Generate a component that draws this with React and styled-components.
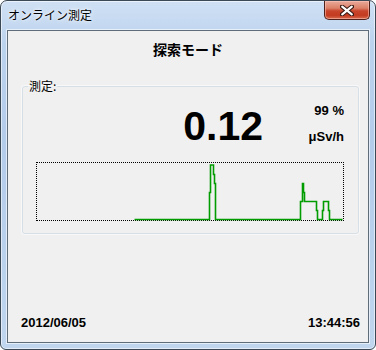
import React from "react";
import styled, { createGlobalStyle } from "styled-components";

const Global = createGlobalStyle`
  html, body { margin: 0; padding: 0; background: #ffffff; }
  * { box-sizing: border-box; }
`;

const Window = styled.div`
  width: 376px;
  height: 350px;
  border: 1px solid #3b4856;
  border-radius: 7px 7px 6px 6px;
  padding: 0 6px 6px 6px;
  display: flex;
  flex-direction: column;
  background: linear-gradient(to bottom, #cfe0f4 0%, #bcd3ee 12%, #b3ccea 40%, #c0d6ef 100%);
  box-shadow: inset 0 0 0 1px rgba(255, 255, 255, 0.55);
  overflow: hidden;
`;

const TitleBar = styled.div`
  height: 29px;
  display: flex;
  align-items: flex-start;
  justify-content: space-between;
  padding-left: 1px;
`;

const TitleText = styled.div`
  margin-top: 6px;
  font-family: "Noto Sans CJK JP", sans-serif;
  font-size: 12px;
  line-height: 16px;
  color: #000;
  text-shadow: 0 0 6px rgba(255, 255, 255, 0.9), 0 0 3px rgba(255, 255, 255, 0.9);
`;

const CloseButton = styled.div`
  width: 46px;
  height: 19px;
  margin-right: -1px;
  border: 1px solid #4f2019;
  border-top: none;
  border-radius: 0 0 5px 5px;
  background: linear-gradient(to bottom, #e9a99a 0%, #dc8068 40%, #c8442a 55%, #c43c22 80%, #d66a4c 100%);
  box-shadow: inset 0 0 0 1px rgba(255, 200, 190, 0.55);
  display: flex;
  align-items: center;
  justify-content: center;
`;

const Client = styled.div`
  flex: 1;
  border: 1px solid #5f6d7b;
  box-shadow: 0 0 0 1px rgba(255, 255, 255, 0.6);
  background: #f0f0f0;
  display: flex;
  flex-direction: column;
`;

const ModeTitle = styled.div`
  padding-top: 10px;
  text-align: center;
  font-family: "Noto Sans CJK JP", sans-serif;
  font-weight: 700;
  font-size: 14px;
  line-height: 16px;
  color: #000;
`;

const Group = styled.fieldset`
  margin: 21px 9px 0 14px;
  padding: 0 14px 12px 13px;
  border: 1px solid #d5dfe5;
  border-radius: 3px;
  box-shadow: 0 0 0 1px rgba(255, 255, 255, 0.5);
  min-width: 0;
`;

const Legend = styled.legend`
  margin-left: -8px;
  padding: 0 1px;
  font-family: "Noto Sans CJK JP", sans-serif;
  font-size: 12px;
  line-height: 16px;
  color: #000;
`;

const ValueRow = styled.div`
  display: flex;
  justify-content: flex-end;
  align-items: flex-start;
  gap: 21px;
  padding-top: 4px;
`;

const BigValue = styled.div`
  margin-top: 8px;
  font-family: "Liberation Sans", Arial, sans-serif;
  font-weight: 700;
  font-size: 41px;
  line-height: 41px;
  color: #000;
`;

const Units = styled.div`
  width: 60px;
  text-align: right;
  font-family: "Liberation Sans", Arial, sans-serif;
  font-weight: 700;
  font-size: 13px;
  line-height: 26px;
  color: #000;
`;

const Chart = styled.div`
  position: relative;
  margin-top: 12px;
  height: 59px;
  border: 1px dotted #000;
`;

const ChartSvg = styled.svg`
  position: absolute;
  left: -1px;
  top: -1px;
  overflow: visible;
`;

const Spacer = styled.div`
  flex: 1;
`;

const Footer = styled.div`
  display: flex;
  justify-content: space-between;
  padding: 0 8px 11px 13px;
  font-family: "Liberation Sans", Arial, sans-serif;
  font-weight: 700;
  font-size: 13px;
  line-height: 16px;
  color: #000;
`;

const pagePoints = [
  [134, 220], [209, 220], [209, 193], [210, 193], [210, 165.5], [213, 165.5],
  [213, 175], [214, 175], [214, 184], [215, 184], [215, 220], [300, 220],
  [300, 202], [302, 202], [302, 184], [303, 184], [303, 193], [304, 193],
  [304, 202], [316, 202], [316, 211], [317, 211], [317, 220], [322, 220],
  [322, 211], [323, 211], [323, 202], [328, 202], [328, 211], [329, 211],
  [329, 220], [342, 220],
];

const points = pagePoints.map(([x, y]) => `${x - 36 + 0.5},${y - 163 + 0.5}`).join(" ");

export default function App() {
  return (
    <>
      <Global />
      <Window>
        <TitleBar>
          <TitleText>オンライン測定</TitleText>
          <CloseButton>
            <svg width="14" height="11" viewBox="0 0 14 11">
              <path d="M2 1.5 L12 9.5 M12 1.5 L2 9.5" stroke="#3a1a14" strokeWidth="4.2" strokeLinecap="round" />
              <path d="M2.2 1.7 L11.8 9.3 M11.8 1.7 L2.2 9.3" stroke="#ffffff" strokeWidth="2.2" strokeLinecap="round" />
            </svg>
          </CloseButton>
        </TitleBar>
        <Client>
          <ModeTitle>探索モード</ModeTitle>
          <Group>
            <Legend>測定:</Legend>
            <ValueRow>
              <BigValue>0.12</BigValue>
              <Units>
                <div>99 %</div>
                <div>μSv/h</div>
              </Units>
            </ValueRow>
            <Chart>
              <ChartSvg width="308" height="59" viewBox="0 0 308 59">
                <polyline points={points} fill="none" stroke="#009c00" strokeWidth="1.6" />
              </ChartSvg>
            </Chart>
          </Group>
          <Spacer />
          <Footer>
            <span>2012/06/05</span>
            <span>13:44:56</span>
          </Footer>
        </Client>
      </Window>
    </>
  );
}
